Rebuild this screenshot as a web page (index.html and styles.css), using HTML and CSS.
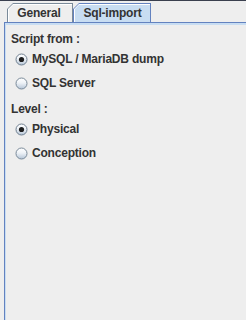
FILE: index.html
```html
<!DOCTYPE html>
<html lang="en">
<head>
  <meta charset="UTF-8">
  <title>Sql-import</title>
  <link rel="stylesheet" href="styles.css">
</head>
<body>
  <svg class="defs" width="0" height="0" aria-hidden="true">
    <defs>
      <linearGradient id="radio-fill" x1="0" y1="0" x2="0" y2="1">
        <stop offset="0" stop-color="#ffffff"/>
        <stop offset="0.45" stop-color="#eef2f7"/>
        <stop offset="1" stop-color="#b4c4d6"/>
      </linearGradient>
    </defs>
  </svg>

  <div class="window">
    <div class="tabs">
      <div class="tab">
        <div class="tab-hl"><div class="tab-face">General</div></div>
      </div>
      <div class="tab tab-selected">
        <div class="tab-hl"><div class="tab-face">Sql-import</div></div>
      </div>
    </div>

    <div class="pane">
      <div class="pane-body">
        <div class="group-label">Script from :</div>
        <label class="radio-row">
          <svg class="radio" width="13" height="13" viewBox="0 0 13 13">
            <circle cx="6.5" cy="6.5" r="5.5" fill="url(#radio-fill)" stroke="#6f7f8f"/>
            <circle cx="6.5" cy="6.5" r="2.6" fill="#1e1e1e"/>
          </svg>
          <span>MySQL / MariaDB dump</span>
        </label>
        <label class="radio-row">
          <svg class="radio" width="13" height="13" viewBox="0 0 13 13">
            <circle cx="6.5" cy="6.5" r="5.5" fill="url(#radio-fill)" stroke="#7a8a99"/>
          </svg>
          <span>SQL Server</span>
        </label>

        <div class="group-label group-next">Level :</div>
        <label class="radio-row">
          <svg class="radio" width="13" height="13" viewBox="0 0 13 13">
            <circle cx="6.5" cy="6.5" r="5.5" fill="url(#radio-fill)" stroke="#6f7f8f"/>
            <circle cx="6.5" cy="6.5" r="2.6" fill="#1e1e1e"/>
          </svg>
          <span>Physical</span>
        </label>
        <label class="radio-row">
          <svg class="radio" width="13" height="13" viewBox="0 0 13 13">
            <circle cx="6.5" cy="6.5" r="5.5" fill="url(#radio-fill)" stroke="#7a8a99"/>
          </svg>
          <span>Conception</span>
        </label>
      </div>
    </div>
  </div>
</body>
</html>
```

FILE: styles.css
```css
body {
  margin: 0;
  padding: 0;
  background-color: #eeeeee;
  font-family: 'Liberation Sans', Arial, sans-serif;
  font-weight: bold;
  font-size: 12px;
  letter-spacing: -0.2px;
  color: #333333;
}

.defs {
  position: absolute;
}

.window {
  height: 319px;
  border-top: 1px solid #3a3f4e; /* frame edge */
  display: flex;
  flex-direction: column;
}

/* tab strip */
.tabs {
  display: flex;
  padding: 2px 0 0 7px;
  height: 19px;
}

.tab {
  width: 66px;
  height: 19px;
  box-sizing: border-box;
  padding: 1px 1px 0 1px;
  background-color: #7a8a99;
  clip-path: polygon(0 6px, 6px 0, 100% 0, 100% 100%, 0 100%);
}

.tab-selected {
  width: 78px;
  background-color: #6382bf;
}

.tab-hl {
  height: 100%;
  box-sizing: border-box;
  padding: 1px 0 0 1px;
  background-color: #ffffff;
  clip-path: polygon(0 5px, 5px 0, 100% 0, 100% 100%, 0 100%);
}

.tab-face {
  height: 100%;
  background-color: #eeeeee;
  clip-path: polygon(0 4px, 4px 0, 100% 0, 100% 100%, 0 100%);
  text-align: center;
  line-height: 16px;
  padding-right: 3px;
}

.tab-selected .tab-face {
  background-color: #c8ddf2;
  padding-right: 0;
}

/* content pane */
.pane {
  flex-grow: 1;
  margin-left: 4px;
  border-top: 1px solid #6382bf;
  border-left: 1px solid #6382bf;
}

.pane-body {
  height: 100%;
  box-sizing: border-box;
  border-top: 2px solid #c8ddf2;
  border-left: 1px solid #c8ddf2;
  padding: 7px 0 0 5px;
}

.group-label {
  height: 15px;
  line-height: 15px;
}

.group-next {
  margin-top: 7px;
}

.radio-row {
  display: flex;
  align-items: center;
  gap: 4px;
  height: 24px;
  padding-left: 4px;
  cursor: pointer;
}

.radio {
  flex-shrink: 0;
}
```
